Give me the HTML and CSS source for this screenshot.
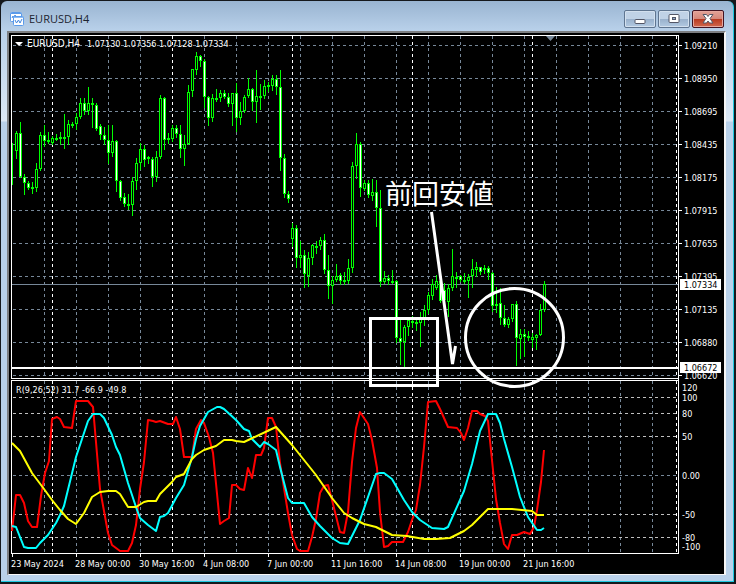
FILE: index.html
```html
<!DOCTYPE html>
<html lang="ja">
<head>
  <meta charset="UTF-8">
  <meta name="viewport" content="width=device-width, initial-scale=1.0">
  <title>EURUSD,H4</title>
  <link rel="stylesheet" href="styles.css">
</head>
<body>

<div class="window">
  <header class="titlebar">
    <svg class="app-icon" viewBox="0 0 14 14" width="14" height="14" aria-hidden="true">
      <rect x="0.5" y="0.5" width="11" height="9" rx="1" fill="#fff" stroke="#5b9bea"/>
      <path d="M1 1.5h10" stroke="#5b9bea"/>
      <path d="M2 6l1-2 1 2 1-3 1 2h2" fill="none" stroke="#3f86e0"/>
      <rect x="3.5" y="4.5" width="10" height="9" rx="1" fill="#fff" stroke="#5b9bea"/>
      <path d="M4 5.5h9" stroke="#8cbcf5"/>
      <path d="M5 8l1.5 3 2-3 1.5 3 2-4" fill="none" stroke="#3f86e0"/>
    </svg>
    <h1>EURUSD,H4</h1>
    <div class="buttons">
      <button type="button" aria-label="Minimize">
        <svg viewBox="0 0 12 12" width="12" height="12"><rect x="1" y="6.5" width="10" height="4" rx="1" fill="#fff" stroke="#535666"/></svg>
      </button>
      <button type="button" aria-label="Maximize">
        <svg viewBox="0 0 12 12" width="12" height="12">
          <rect x="1" y="1.5" width="10" height="8" rx="1" fill="#fff" stroke="#535666"/>
          <rect x="4.5" y="4.5" width="3" height="2" fill="#8fa9c8" stroke="#535666"/>
        </svg>
      </button>
      <button type="button" class="close" aria-label="Close">
        <svg viewBox="0 0 12 12" width="12" height="12">
          <path d="M1 1.5h3.5L6 3.5l1.5-2H11L8 5.5l3 4.5H7.5L6 8l-1.5 2H1l3-4.5z" fill="#fff" stroke="#535666"/>
        </svg>
      </button>
    </div>
  </header>

  <main class="client">
    <svg id="chart" class="chart" viewBox="9 33 715 541" role="img" aria-label="EURUSD H4">
      <g id="grid"></g>
      <path class="bid" d="M12 284.5H678"/>
      <g id="candles"></g>
      <path class="frame" d="M678.5 378.5H11.5V35.5H678.5V553.5H11.5V380.5H678.5"/>
      <path class="support" d="M12 368H678"/>
      <path class="shift" d="M546 36h9l-4.5 5z"/>

      <path class="arrow-down" d="M15 42h8l-4 4z"/>
      <text class="symbol" x="27" y="47">EURUSD,H4</text>
      <text x="87" y="47">1.07130 1.07356 1.07128 1.07334</text>
      <text x="16" y="393">R(9,26,52) 31.7 -66.9 -49.8</text>

      <g id="oscillator"></g>
      <g id="axes"></g>

      <rect class="tag" x="680" y="279" width="41" height="11"/>
      <text class="tag-text" x="684" y="288">1.07334</text>
      <rect class="tag" x="680" y="362" width="41" height="11"/>
      <text class="tag-text" x="684" y="371">1.06672</text>

      <g class="drawing">
        <rect x="370.5" y="318.5" width="67" height="67"/>
        <circle cx="514.5" cy="337.5" r="49"/>
        <path d="M431.5 212L452.5 364L455.5 346"/>
      </g>
      <text class="note" x="385" y="204">前回安値</text>
    </svg>
  </main>
</div>

<script src="chart.js"></script>
</body>
</html>
```
FILE: styles.css
```css
body {
  margin: 0;
  background: #15181c;
  font-family: "Open Sans", "Noto Sans", sans-serif;
}
.window {
  margin: 1px 2px 0 1px;
  padding: 0 7px 6px 6px;
  border-right: 1px solid #1cc8e0;
  border-bottom: 1px solid #1cc8e0;
  border-radius: 6px 6px 0 0;
  background: linear-gradient(#99b4d1, #b9d1ea 30px, #dce8f5 120px, #b9d1ea 121px);
}
.titlebar {
  display: flex;
  align-items: center;
  box-sizing: border-box;
  height: 30px;
  padding: 6px 2px 0 3px;
}
.titlebar h1 {
  flex: 1;
  margin: 0 0 0 5px;
  font-size: 11px;
  line-height: 16px;
  font-weight: 400;
  color: #1c2430;
}
.app-icon {
  display: block;
}
.buttons {
  display: flex;
  gap: 2px;
}
.buttons button {
  display: flex;
  align-items: center;
  justify-content: center;
  width: 32px;
  height: 18px;
  padding: 0;
  border: 1px solid #5f7590;
  border-radius: 2px;
  box-shadow: inset 0 0 0 1px #d3e0ee;
  background: linear-gradient(#c0d2e6 50%, #98b0cb 50%, #b3cae2);
}
.buttons .close {
  border-color: #431422;
  box-shadow: inset 0 0 0 1px #e5a79e;
  background: linear-gradient(#e2a297, #d5877a 50%, #b8381f 50%, #d1694f);
}
.client {
  border: 2px solid;
  border-color: #7d7f82 #f6f6f6 #f6f6f6 #7d7f82;
  border-bottom-width: 1px;
  background: #000;
}
.chart {
  display: block;
  width: 100%;
  height: auto;
}
.chart text {
  font-family: "DejaVu Sans Condensed", "Noto Sans", sans-serif;
  font-size: 9px;
  fill: #fff;
}
.chart .symbol {
  font-size: 10px;
}
.grid-line {
  stroke: #778899;
  stroke-dasharray: 3 3;
}
.separator {
  stroke: #fff;
  stroke-dasharray: 3 3;
}
.level {
  stroke: #c0c0c0;
  stroke-dasharray: 3 3;
}
.grid-line, .separator, .level, .frame, .tick, .bid, .candle {
  shape-rendering: crispEdges;
}
.frame, .tick {
  fill: none;
  stroke: #fff;
}
.bid {
  stroke: #778899;
}
.support {
  stroke: #fff;
  stroke-width: 2px;
}
.shift {
  fill: #778899;
}
.arrow-down, .tag {
  fill: #fff;
}
.chart .tag-text {
  fill: #000;
}
.candle {
  stroke: #00ff00;
}
.candle .up {
  fill: #000;
}
.candle .down {
  fill: #fff;
}
.curve {
  fill: none;
  stroke-width: 2px;
  stroke-linejoin: round;
}
.curve.short {
  stroke: #ff0000;
}
.curve.middle {
  stroke: #00ffff;
}
.curve.long {
  stroke: #ffff00;
}
.drawing {
  fill: none;
  stroke: #fff;
  stroke-width: 3px;
}
.chart .note {
  font-family: "Noto Sans CJK JP", sans-serif;
  font-size: 27px;
}
```
FILE: chart.js
```js
const SVG = 'http://www.w3.org/2000/svg';

const prices = ['1.09210', '1.08950', '1.08695', '1.08435', '1.08175', '1.07915',
  '1.07655', '1.07395', '1.07135', '1.06880', '1.06620'];
const times = ['23 May 2024', '28 May 00:00', '30 May 16:00', '4 Jun 08:00', '7 Jun 00:00',
  '11 Jun 16:00', '14 Jun 08:00', '19 Jun 00:00', '21 Jun 16:00'];
const levels = [['100', 397], ['80', 413], ['50', 436], ['0.00', 475], ['-50', 514], ['-80', 537]];

// high, body top, body bottom, low, 1 = rising / 0 = falling
const candles = [
  [143,143,166,184,1],[131,133,151,158,1],[122,133,177,177,0],[174,177,183,194,0],
  [181,183,188,189,0],[182,187,189,193,1],[163,169,188,191,1],[132,135,169,170,1],
  [125,135,141,146,0],[132,140,142,143,0],[136,138,143,144,1],[134,138,138,140,1],
  [132,137,138,144,1],[114,137,138,148,1],[120,124,137,144,1],[122,124,125,127,0],
  [113,117,124,129,1],[98,103,117,118,1],[98,103,111,114,0],[87,103,111,114,1],
  [98,103,105,127,0],[103,105,129,130,0],[124,126,135,139,0],[127,135,140,144,0],
  [125,140,153,163,0],[125,141,153,156,1],[140,141,181,191,0],[180,181,198,200,0],
  [193,197,204,206,0],[194,204,205,209,0],[177,181,205,215,1],[158,163,181,189,1],
  [143,149,163,169,1],[145,149,160,166,0],[156,157,159,163,0],[157,159,177,186,0],
  [151,157,177,181,1],[95,98,157,158,1],[97,98,140,149,0],[133,138,140,143,1],
  [125,128,139,141,1],[125,128,134,137,0],[125,134,149,157,0],[135,144,149,165,1],
  [85,92,144,144,1],[69,69,91,96,1],[52,56,70,74,1],[55,56,61,66,0],
  [59,61,97,107,0],[96,97,118,125,0],[94,98,118,121,1],[89,98,100,101,0],
  [90,93,98,101,1],[90,93,97,98,0],[93,97,104,106,0],[93,93,104,125,1],
  [83,93,118,131,0],[102,111,118,124,1],[95,97,111,112,1],[78,89,96,97,1],
  [88,89,102,110,0],[70,96,102,122,1],[84,96,97,109,0],[80,86,96,98,1],
  [82,85,86,91,1],[75,79,86,90,1],[75,79,87,94,0],[70,87,158,170,0],
  [154,158,194,197,0],[191,194,199,202,0],[223,228,239,246,1],[225,228,258,267,0],
  [241,255,258,267,1],[250,255,274,287,0],[252,258,276,286,1],[244,245,258,264,1],
  [241,246,247,253,0],[237,240,246,249,1],[234,240,270,273,0],[255,270,286,298,0],
  [276,280,286,303,1],[264,276,280,281,1],[273,275,281,284,0],[272,280,281,284,0],
  [259,268,281,283,1],[162,166,268,272,1],[133,144,166,178,1],[142,144,188,196,0],
  [180,183,189,190,1],[180,183,195,197,0],[179,192,196,200,1],[180,192,208,226,0],
  [190,208,282,286,0],[271,278,282,283,1],[275,278,281,284,0],[270,281,281,283,1],
  [280,281,338,342,0],[320,338,342,364,0],[325,327,342,367,1],[318,320,327,335,1],
  [316,321,322,327,0],[317,322,323,330,0],[312,319,323,346,1],[305,310,319,325,1],
  [292,295,310,313,1],[279,284,296,299,1],[275,281,288,289,1],[281,281,301,302,0],
  [283,290,300,302,0],[284,288,302,316,1],[249,276,288,290,1],[272,277,278,287,0],
  [275,276,280,281,0],[273,280,282,283,0],[274,277,281,297,1],[259,269,276,287,1],
  [262,267,270,276,1],[267,267,272,274,0],[265,268,269,273,0],[266,268,273,279,0],
  [272,273,306,311,0],[287,304,306,312,1],[288,303,318,324,0],[305,318,325,326,0],
  [317,319,325,327,1],[304,304,319,321,1],[301,304,338,365,0],[329,334,339,358,1],
  [329,334,337,356,0],[331,336,337,340,0],[333,337,340,347,1],[334,335,338,349,1],
  [304,310,335,335,1],[281,284,310,311,1]
];

const curves = {
  short: '12,531 16,495 20,495 24,503 28,521 32,527 37,527 41,496 45,473 49,461 52,419 57,417 60,419 64,427 72,428 76,401 88,401 93,407 100,489 108,533 112,545 120,551 128,551 132,543 136,525 140,489 144,462 148,420 153,421 156,422 160,421 168,424 173,424 176,417 180,429 184,457 192,457 196,429 201,420 204,423 209,437 213,453 220,524 224,521 229,518 232,485 236,485 240,489 244,490 248,468 252,478 256,455 261,455 264,448 268,418 272,418 276,427 280,463 288,513 292,535 297,549 300,551 308,551 312,537 316,519 320,493 324,486 328,485 332,500 340,532 344,533 348,512 352,462 356,428 360,412 364,418 368,424 372,440 377,468 380,512 384,547 388,546 392,542 403,542 408,532 412,520 416,510 420,485 424,447 428,402 436,401 440,409 444,418 448,427 457,428 461,433 464,440 468,428 472,411 477,411 480,414 485,416 488,421 493,470 496,499 500,523 504,544 508,549 512,535 517,535 524,532 530,534 534,527 537,510 541,482 544,450',
  middle: '12,526 16,527 20,537 24,547 28,548 36,548 40,543 48,535 56,523 60,515 64,506 76,457 88,421 93,414 100,414 104,418 112,435 116,447 120,455 128,483 136,507 140,518 148,525 156,531 160,517 164,516 168,513 176,498 184,485 192,457 196,439 200,426 208,412 217,407 220,407 224,409 236,420 244,429 249,431 252,439 260,447 264,442 268,444 276,450 280,467 288,498 292,503 304,503 312,517 320,526 332,538 340,543 348,544 360,520 376,474 380,473 384,473 392,479 404,500 412,512 420,520 432,528 444,529 448,527 464,491 472,464 480,431 488,414 496,414 500,423 504,439 512,467 520,497 528,517 537,530 541,530 544,528',
  long: '12,443 20,451 32,473 44,489 52,500 60,510 68,519 76,524 84,513 92,497 100,492 108,491 116,491 120,494 128,507 136,507 144,502 148,501 156,501 160,494 172,482 176,477 184,474 192,459 196,455 204,450 216,446 224,440 232,440 236,441 244,442 276,427 292,445 316,475 332,498 344,513 352,518 364,524 376,527 392,535 407,536 424,539 436,539 450,538 464,531 472,525 484,513 488,509 512,509 532,511 537,515 544,515'
};

function add(parent, name, attrs, text) {
  const el = document.createElementNS(SVG, name);
  for (const key in attrs) el.setAttribute(key, attrs[key]);
  if (text) el.textContent = text;
  parent.appendChild(el);
  return el;
}

const grid = document.getElementById('grid');
const axes = document.getElementById('axes');

for (let x = 44; x < 678; x += 32) {
  add(grid, 'path', { class: 'grid-line', d: `M${x + 0.5} 36V378M${x + 0.5} 381V553` });
}

prices.forEach((price, i) => {
  const y = 45 + i * 33;
  add(grid, 'path', { class: 'grid-line', d: `M13 ${y + 0.5}H678` });
  add(axes, 'path', { class: 'tick', d: `M679 ${y + 0.5}h3` });
  add(axes, 'text', { x: 684, y: y + 4 }, price);
});

levels.forEach(([label, y]) => {
  add(grid, 'path', { class: label === '0.00' ? 'grid-line' : 'level', d: `M13 ${y + 0.5}H678` });
  add(axes, 'text', { x: 682, y: y + 4 }, label);
});
add(axes, 'text', { x: 682, y: 391 }, '120');
add(axes, 'text', { x: 682, y: 550 }, '-100');

// period separators
[52, 172, 292, 412, 532, 676].forEach(x => {
  add(grid, 'path', { class: 'separator', d: `M${x + 0.5} 36V378M${x + 0.5} 381V553` });
});

times.forEach((time, i) => {
  add(axes, 'path', { class: 'tick', d: `M${12.5 + i * 64} 553v4` });
  add(axes, 'text', { x: 11 + i * 64, y: 567 }, time);
});

// one bar every 4px
candles.forEach(([high, top, bottom, low, rising], i) => {
  const x = 12 + i * 4;
  const bar = add(document.getElementById('candles'), 'g', { class: 'candle' });
  add(bar, 'path', { d: `M${x + 0.5} ${high}V${low + 1}` });
  if (i > 0) {
    add(bar, 'rect', {
      class: rising ? 'up' : 'down',
      x: x - 0.5, y: top + 0.5, width: 2, height: Math.max(bottom - top - 1, 1)
    });
  }
});

for (const name in curves) {
  add(document.getElementById('oscillator'), 'polyline', { class: 'curve ' + name, points: curves[name] });
}
```
